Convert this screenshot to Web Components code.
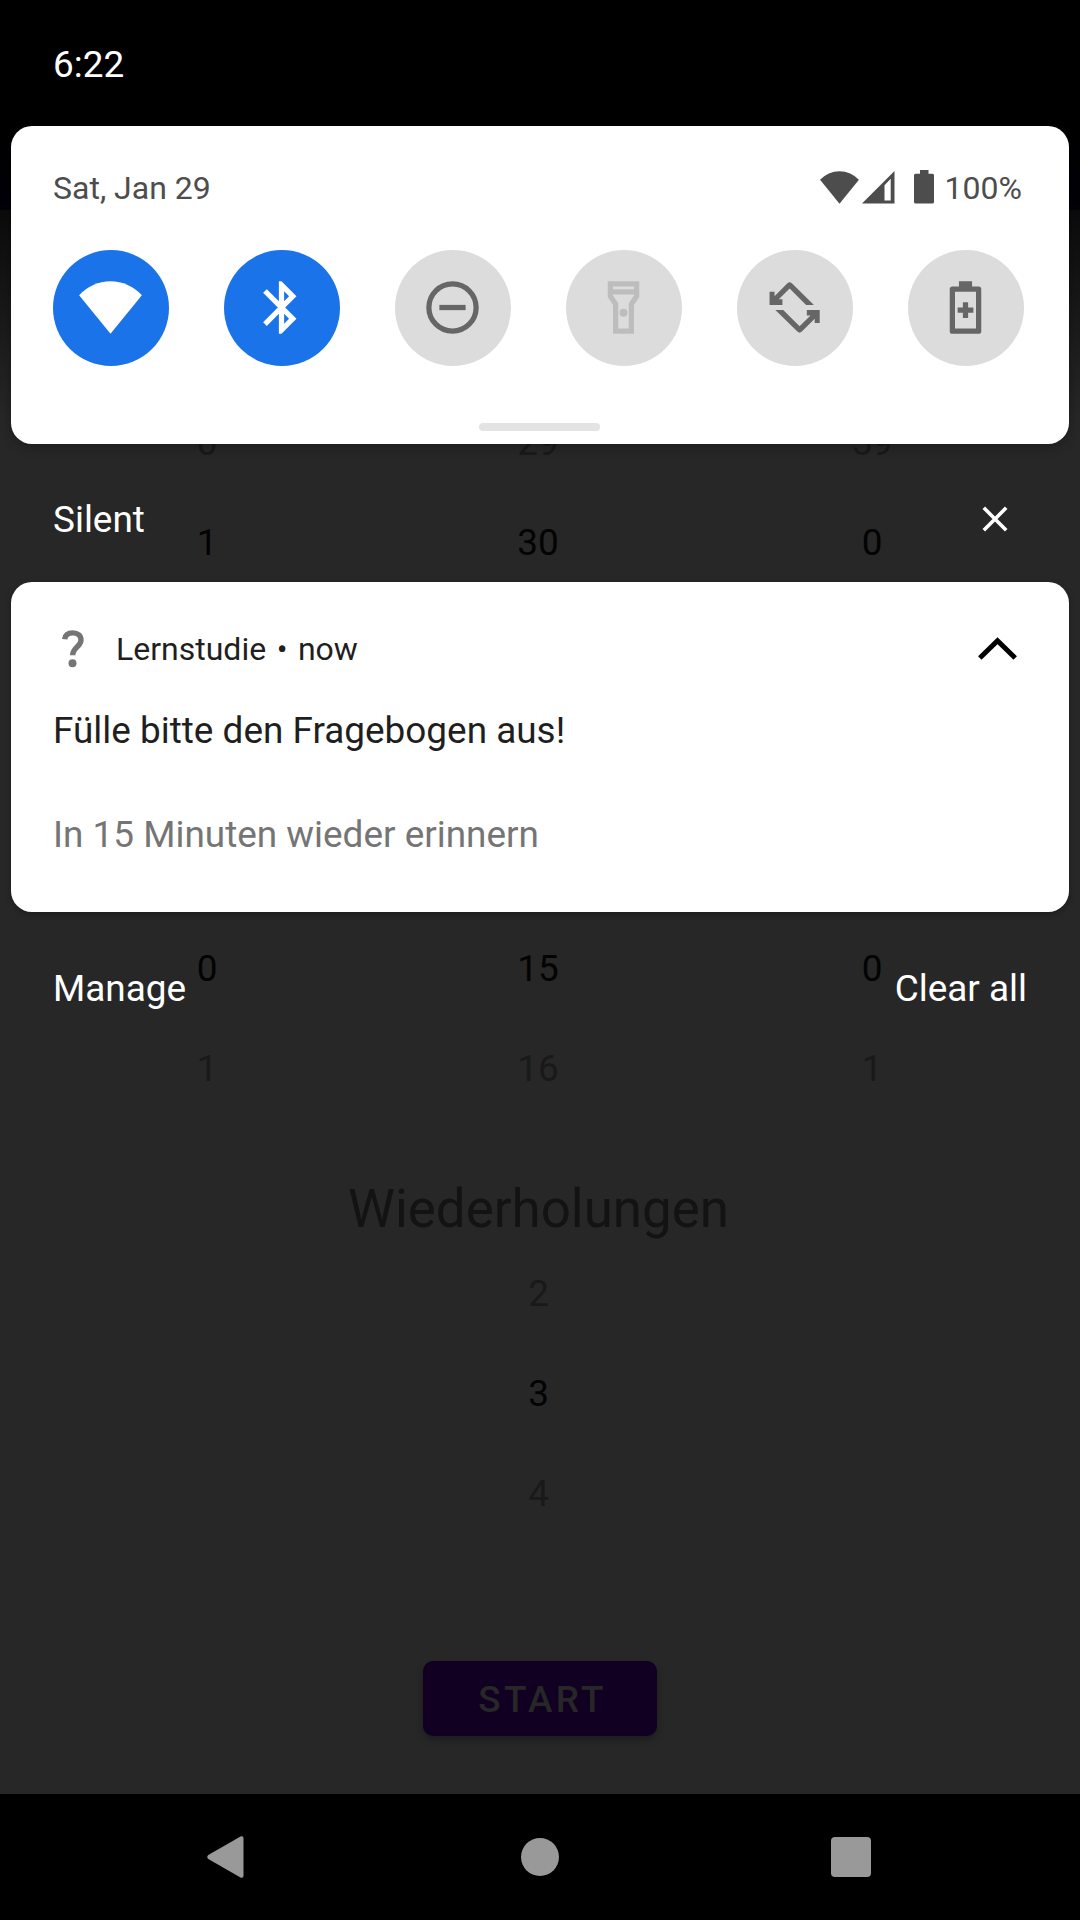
<!DOCTYPE html>
<html lang="en">
<head>
<meta charset="utf-8">
<title>Notification shade</title>
<style>
html,body{margin:0;padding:0;background:#272727}
body{width:1080px;height:1920px;overflow:hidden;font-family:Roboto,"Noto Sans",sans-serif;font-size:36.92px}
</style>
</head>
<body>
<phone-screen>
  <app-page slot="app">
    <number-rows style="margin-top:183px" rows='[["0","29","59"],["1","30","0"]]' active="1"></number-rows>
    <number-rows style="margin-top:326px" rows='[["0","15","0"],["1","16","1"]]' active="0"></number-rows>
    <picker-title>Wiederholungen</picker-title>
    <number-rows single rows='[["2"],["3"],["4"]]' active="1"></number-rows>
    <start-button>START</start-button>
  </app-page>
  <notification-shade slot="shade">
    <status-clock>6:22</status-clock>
    <quick-settings date="Sat, Jan 29" battery="100%">
      <qs-tile icon="wifi" on></qs-tile>
      <qs-tile icon="bluetooth" on></qs-tile>
      <qs-tile icon="dnd"></qs-tile>
      <qs-tile icon="torch" unavailable></qs-tile>
      <qs-tile icon="rotate"></qs-tile>
      <qs-tile icon="saver"></qs-tile>
    </quick-settings>
    <section-header>Silent</section-header>
    <notification-card app="Lernstudie" time="now">
      <span slot="title">Fülle bitte den Fragebogen aus!</span>
      <span slot="action">In 15 Minuten wieder erinnern</span>
    </notification-card>
    <shade-footer><span slot="start">Manage</span><span slot="end">Clear all</span></shade-footer>
  </notification-shade>
  <nav-bar slot="nav"></nav-bar>
</phone-screen>
<script>
function define(name, render) {
  customElements.define(name, class extends HTMLElement {
    constructor() { super(); this.attachShadow({ mode: 'open' }); }
    connectedCallback() { this.shadowRoot.innerHTML = render(this); }
  });
}

const WIFI = '<path d="M12 22L.05 7.3A16.2 16.2 0 0 1 23.95 7.3Z"/>';
const ICONS = {
  wifi: WIFI,
  bluetooth: '<path d="M17.71 7.71L12 2h-1v7.59L6.41 5 5 6.41 10.59 12 5 17.59 6.41 19 11 14.41V22h1l5.71-5.71-4.3-4.29 4.3-4.29zM13 5.83l1.88 1.88L13 9.59V5.83zm1.88 10.46L13 18.17v-3.76l1.88 1.88z"/>',
  dnd: '<circle cx="12" cy="12" r="9" fill="none" stroke="currentColor" stroke-width="2"/><path d="M7 11h10v2H7z"/>',
  torch: '<path fill-rule="evenodd" d="M18 2H6v6l2 3v11h8V11l2-3V2zM16 4v1H8V4h8zM14 10.4V20h-4v-9.6l-2-3V7h8v.4l-2 3z"/><circle cx="12" cy="14" r="1.5"/>',
  rotate: '<path d="M2.5 6H4.4V7.7L9.3 2.75Q10.15 1.95 11 2.75L19.4 11H16.4L10.15 4.75L6 8.9H7.4V11H2.5Z"/><path transform="rotate(180 12.05 11.97)" d="M2.5 6H4.4V7.7L9.3 2.75Q10.15 1.95 11 2.75L19.4 11H16.4L10.15 4.75L6 8.9H7.4V11H2.5Z"/>',
  saver: '<path fill-rule="evenodd" d="M9.5 2h5v2H17a1 1 0 0 1 1 1v16a1 1 0 0 1-1 1H7a1 1 0 0 1-1-1V5a1 1 0 0 1 1-1h2.500zM8 6v14h8V6zM11 10h2v2h2v2h-2v2h-2v-2H9v-2h2z"/>'
};

define('phone-screen', () => `<style>
  :host{display:grid;grid-template:1794px 126px / 1080px;background:#272727}
  ::slotted([slot=app]),::slotted([slot=shade]){grid-area:1/1}
  ::slotted([slot=nav]){grid-area:2/1}
</style><slot name="app"></slot><slot name="shade"></slot><slot name="nav"></slot>`);

define('app-page', () => `<style>
  :host{display:flex;flex-direction:column;align-items:center;
    background:linear-gradient(#0b0b0b,#272727 210px) 0 210px/100% 1584px no-repeat,
      linear-gradient(#000 126px,#030009 210px)}
  .pad{height:210px;flex:none}
</style><div class="pad"></div><slot></slot>`);

define('number-rows', el => {
  const rows = JSON.parse(el.getAttribute('rows'));
  const active = +el.getAttribute('active');
  return `<style>
  :host{display:flex;flex-direction:column;width:1080px;flex:none}
  .r{display:grid;grid-template-columns:331px 331px 337px;justify-content:center;height:100px;line-height:100px;
    padding-left:2px;text-align:center;color:#191919}
  :host([single]) .r{grid-template-columns:331px;padding:0 3px 0 0}
  .r.on{color:#030303}
</style>${rows.map((r, i) => `<div class="r ${i === active ? 'on' : ''}">${r.map(n => `<span>${n}</span>`).join('')}</div>`).join('')}`;
});

define('picker-title', () => `<style>
  :host{display:block;font-size:52.85px;line-height:70px;margin:55px 3px 0 0;color:#131313}
</style><slot></slot>`);

define('start-button', () => `<style>
  :host{display:block;box-sizing:border-box;width:234px;height:75px;line-height:78px;margin-top:117px;border-radius:10px;
    background:#110022;color:#272727;font-weight:500;letter-spacing:3.28px;text-indent:5px;text-align:center;
    box-shadow:0 4px 7px rgba(0,0,0,.28)}
</style><slot></slot>`);

define('notification-shade', () => `<style>
  :host{display:flex;flex-direction:column;color:#fff}
</style><slot></slot>`);

define('status-clock', () => `<style>
  :host{display:block;height:126px;line-height:130px;padding-left:53px;box-sizing:border-box}
</style><slot></slot>`);

define('quick-settings', el => `<style>
  :host{display:flex;flex-direction:column;box-sizing:border-box;height:318px;margin:0 11px;padding:0 45px 0 42px;
    border-radius:21px;background:#fff;box-shadow:0 3px 12px rgba(0,0,0,.3);color:#4d4d4d;font-size:32px}
  .top{display:flex;align-items:center;height:124px;line-height:126px;padding-right:2px}
  .top svg{margin-bottom:2px}
  .date{flex:1}
  .wifi{margin-right:3px}
  .cell{margin-right:19px}
  .batt{margin-right:11px}
  .tiles{display:flex;gap:55px}
  .grip{width:121px;height:8px;border-radius:4px;background:#e3e3e3;margin:57px auto 0;transform:translateX(1px)}
  svg{display:block;fill:currentColor}
</style>
<div class="top"><span class="date">${el.getAttribute('date')}</span>
  <svg class="wifi" width="39" height="39" viewBox="0 0 24 24">${WIFI}</svg>
  <svg class="cell" width="33" height="34" viewBox="0 0 33 34"><path fill-rule="evenodd" d="M0 33.500L32.500 1V33.500ZM22.500 15.300V30.500H28.700V8.800Z"/></svg>
  <svg class="batt" width="20" height="34" viewBox="0 0 20 34"><path d="M6 0h8.500v3.700H18.500Q20 3.700 20 5.200V32Q20 33.500 18.500 33.500H1.500Q0 33.500 0 32V5.200Q0 3.700 1.500 3.700H6z"/></svg>
  <span>${el.getAttribute('battery')}</span></div>
<div class="tiles"><slot></slot></div><div class="grip"></div>`);

define('qs-tile', el => `<style>
  :host{display:flex;align-items:center;justify-content:center;flex:none;width:116px;height:116px;border-radius:50%;
    background:#dcdcdc;color:#666}
  :host([on]){background:#1a73e8;color:#fff}
  :host([unavailable]){color:#bdbdbd}
  svg{display:block;fill:currentColor;margin:0 1px 1px 0}
</style><svg width="63" height="63" viewBox="0 0 24 24">${ICONS[el.getAttribute('icon')]}</svg>`);

define('section-header', () => `<style>
  :host{display:flex;align-items:center;justify-content:space-between;box-sizing:border-box;height:138px;padding:12px 72px 0 53px}
  svg{display:block;margin-bottom:1px}
</style><slot></slot><svg width="26" height="26" viewBox="0 0 26 26" fill="none" stroke="#fff" stroke-width="3.600"><path d="M1.800 1.800L24.200 24.200M24.200 1.800L1.800 24.200"/></svg>`);

define('notification-card', el => `<style>
  :host{display:block;box-sizing:border-box;height:330px;margin:0 11px;padding:31px 52px 0 42px;border-radius:21px;
    background:#fff;color:#1f1f1f;box-shadow:0 2px 6px rgba(0,0,0,.3)}
  .head{display:flex;align-items:center;height:72px;line-height:76px;font-size:32px}
  .q{margin:-1px 32px 0 9px}
  .app{flex:1;display:flex;gap:10.5px}
  svg{display:block}
  .title{line-height:92px;height:90px}
  .action{line-height:92px;height:90px;margin-top:14px;color:#757575}
</style>
<div class="head">
  <svg class="q" width="22" height="38" viewBox="0 0 22 38" fill="none" stroke="#757575" stroke-width="5.400"><path d="M2.700 9.200C3.200 4.700 6.300 2.900 10.800 2.900C15.800 2.900 19 5.700 19 10.200C19 16.600 10.700 17 10.700 25.300"/><circle cx="10.500" cy="33.300" r="4" fill="#757575" stroke="none"/></svg>
  <span class="app"><span>${el.getAttribute('app')}</span><span>•</span><span>${el.getAttribute('time')}</span></span>
  <svg width="40" height="24" viewBox="0 0 40 24" fill="none" stroke="#000" stroke-width="5"><path d="M2.800 21L20.500 3.800L38.200 21"/></svg>
</div>
<div class="title"><slot name="title"></slot></div>
<div class="action"><slot name="action"></slot></div>`);

define('shade-footer', () => `<style>
  :host{display:flex;justify-content:space-between;line-height:154px;height:152px;padding:0 53px}
</style><slot name="start"></slot><slot name="end"></slot>`);

define('nav-bar', () => `<style>
  :host{display:flex;align-items:center;background:#000;box-sizing:border-box;padding:0 209px 0 207px;justify-content:space-between}
  svg{display:block;fill:#999}
  .home{margin-left:4px}
</style>
<svg width="37" height="42" viewBox="0 0 37 42"><path d="M33.500.6Q36.500-.8 36.500 2.500V39.500Q36.500 42.800 33.500 41.400L1.300 23Q-.8 21 1.300 19Z"/></svg>
<svg class="home" width="38" height="38" viewBox="0 0 38 38"><circle cx="19" cy="19" r="19"/></svg>
<svg width="40" height="40" viewBox="0 0 40 40"><rect width="40" height="40" rx="4"/></svg>`);
</script>
</body>
</html>
